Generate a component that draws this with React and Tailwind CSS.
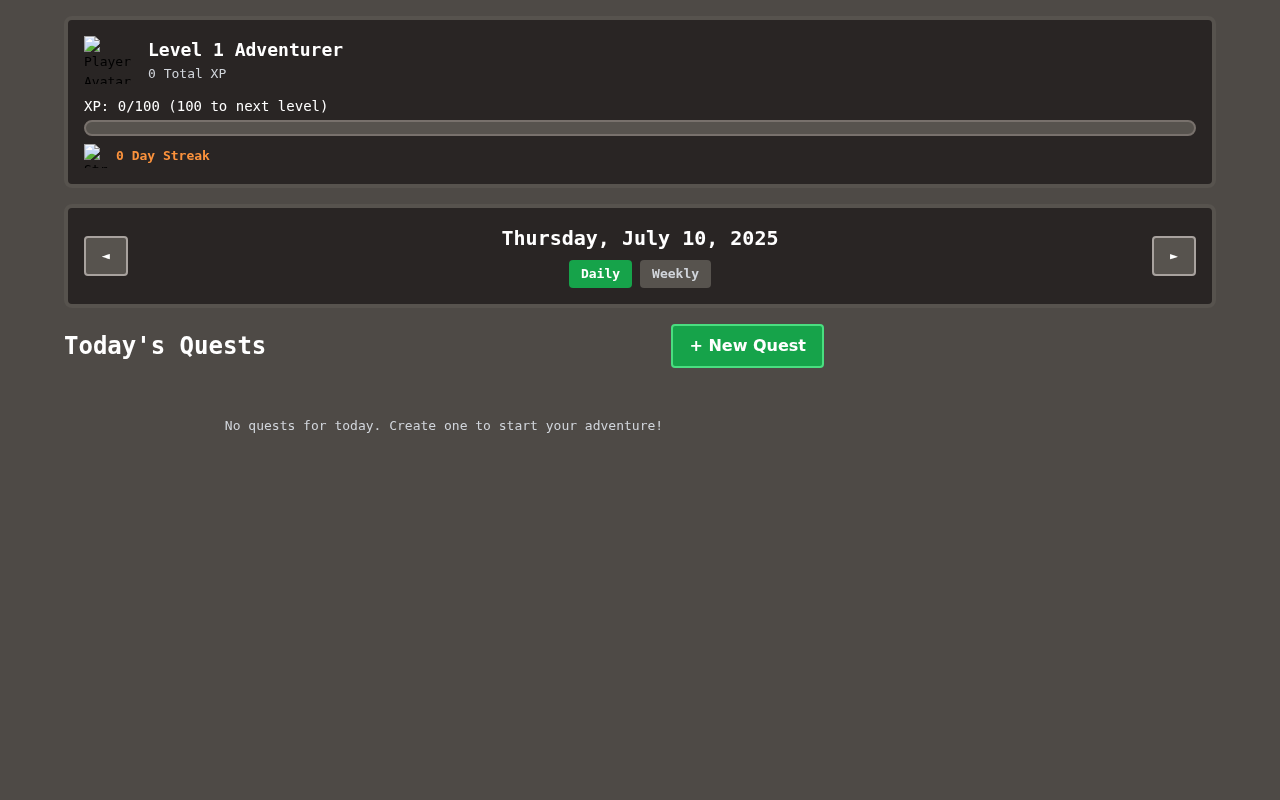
export default function App() {
  const mono = "font-['DejaVu_Sans_Mono',monospace]";
  return (
    <div className={`min-h-screen bg-[#4e4a46] bg-[radial-gradient(#47433f_0.5px,transparent_0.5px)] bg-[size:2px_2px] ${mono}`}>
      <div className="mx-auto max-w-[1152px] py-4 will-change-transform">
        <div className="mb-4 rounded-lg border-4 border-[#57534e] bg-[#292524] p-4">
          <div className="mb-3 flex items-center gap-4">
            <img src="avatar.png" alt="Player Avatar" className="h-12 w-12 text-[13px] text-black" />
            <div>
              <h2 className="text-lg font-bold leading-7 text-white">Level 1 Adventurer</h2>
              <p className="text-[13px] leading-5 text-[#d1d5db]">0 Total XP</p>
            </div>
          </div>
          <div className="mb-1 flex h-5 items-center text-sm text-white">XP: 0/100 (100 to next level)</div>
          <div className="h-4 w-full rounded-full border-2 border-[#78716c] bg-[#57534e]" />
          <div className="mt-2 flex items-center gap-2">
            <img src="streak.png" alt="Streak" className="h-6 w-6 text-[13px] text-black" />
            <span className="text-[13px] font-bold text-[#fb923c]">0 Day Streak</span>
          </div>
        </div>

        <div className="mb-4 flex items-center justify-between rounded-lg border-4 border-[#57534e] bg-[#292524] p-4">
          <button className="h-10 w-11 rounded border-2 border-[#a8a29e] bg-[#57534e] text-[13px] text-white">◄</button>
          <div className="flex flex-col items-center">
            <h2 className="text-xl font-bold leading-7 text-white">Thursday, July 10, 2025</h2>
            <div className="mt-2 flex gap-2">
              <button className="h-7 rounded bg-[#16a34a] px-3 text-[13px] font-bold text-white">Daily</button>
              <button className="h-7 rounded bg-[#57534e] px-3 text-[13px] font-bold text-[#d1d5db]">Weekly</button>
            </div>
          </div>
          <button className="h-10 w-11 rounded border-2 border-[#a8a29e] bg-[#57534e] text-[13px] text-white">►</button>
        </div>

        <div className="grid grid-cols-3 gap-6">
          <div className="col-span-2">
            <div className="mb-4 flex items-center justify-between">
              <h2 className="text-2xl font-bold text-white">Today's Quests</h2>
              <button className="h-11 rounded border-2 border-[#4ade80] bg-[#16a34a] px-4 font-['DejaVu_Sans',sans-serif] font-bold text-white">+ New Quest</button>
            </div>
            <p className="py-8 text-center text-[13px] leading-5 text-[#d1d5db]">No quests for today. Create one to start your adventure!</p>
          </div>
        </div>
      </div>
    </div>
  );
}
